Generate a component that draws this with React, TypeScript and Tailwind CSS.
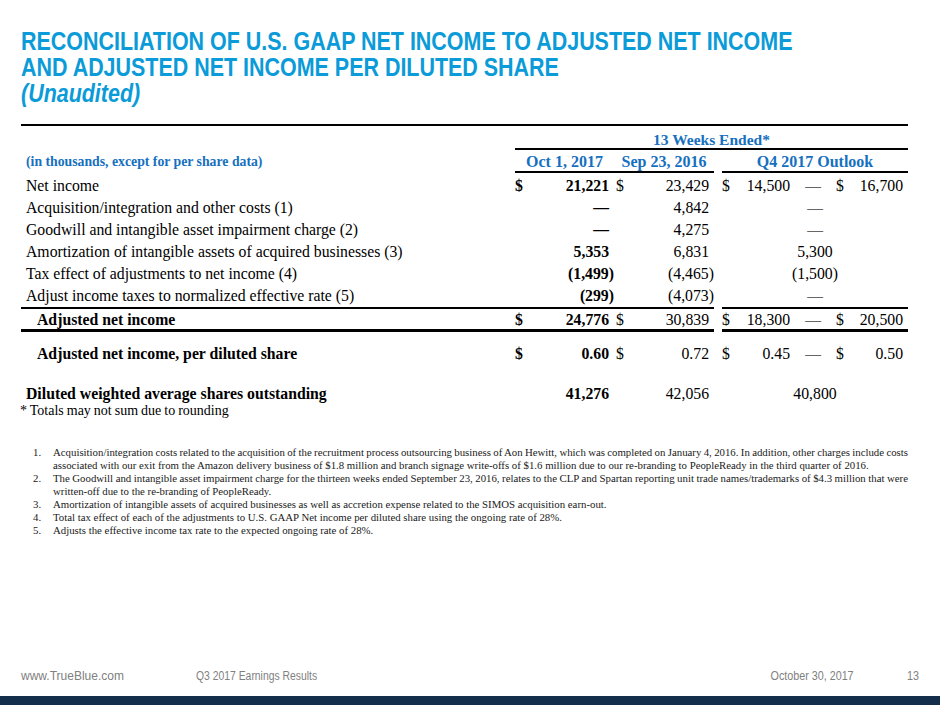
const serif = { fontFamily: '"Liberation Serif", "Times New Roman", serif' }
const sans = { fontFamily: '"Liberation Sans", Arial, sans-serif' }

type Cell = string | null

function Num({ v, bold }: { v: Cell; bold?: boolean }) {
  if (v === null) return null
  const paren = v.endsWith(')')
  return <span className={`${paren ? '' : 'pr-[5px]'} ${bold ? 'font-bold' : ''}`}>{v}</span>
}

function Row({
  label,
  c1,
  c2,
  out,
  dollar,
  bold,
  labelBold,
  indent,
  rowClass,
  leftBorder,
  rightBorder,
}: {
  label: string
  c1: Cell
  c2: Cell
  out: string | [string, string] | null
  dollar?: boolean
  bold?: boolean
  labelBold?: boolean
  indent?: boolean
  rowClass: string
  leftBorder?: string
  rightBorder?: string
}) {
  return (
    <div className={`flex ${rowClass}`}>
      <div className={`flex w-[693px] ${leftBorder ?? ''}`}>
        <div className={`flex-1 ${indent ? 'pl-[16px]' : 'pl-[5px]'} ${labelBold ? 'font-bold' : ''}`}>{label}</div>
        <div className="w-[99px] flex justify-between">
          <span className="font-bold">{dollar ? '$' : ''}</span>
          <Num v={c1} bold={bold} />
        </div>
        <div className="w-[100px] flex justify-between pl-[2px]">
          <span>{dollar ? '$' : ''}</span>
          <Num v={c2} />
        </div>
      </div>
      <div className="w-[8px]" />
      <div className={`w-[186px] ${rightBorder ?? ''}`}>
        {Array.isArray(out) ? (
          <div className="flex">
            <span className="w-[8px]">$</span>
            <span className="w-[60px] text-right">{out[0]}</span>
            <span className="w-[46px] text-center text-[#666]">—</span>
            <span className="w-[8px]">$</span>
            <span className="w-[59px] text-right">{out[1]}</span>
          </div>
        ) : (
          <div className={`text-center ${out === '—' ? 'text-[#666]' : ''}`}>{out}</div>
        )}
      </div>
    </div>
  )
}

const notes: string[][] = [
  [
    'Acquisition/integration costs related to the acquisition of the recruitment process outsourcing business of Aon Hewitt, which was completed on January 4, 2016. In addition, other charges include costs',
    'associated with our exit from the Amazon delivery business of $1.8 million and branch signage write-offs of $1.6 million due to our re-branding to PeopleReady in the third quarter of 2016.',
  ],
  [
    'The Goodwill and intangible asset impairment charge for the thirteen weeks ended September 23, 2016, relates to the CLP and Spartan reporting unit trade names/trademarks of $4.3 million that were',
    'written-off due to the re-branding of PeopleReady.',
  ],
  ['Amortization of intangible assets of acquired businesses as well as accretion expense related to the SIMOS acquisition earn-out.'],
  ['Total tax effect of each of the adjustments to U.S. GAAP Net income per diluted share using the ongoing rate of 28%.'],
  ['Adjusts the effective income tax rate to the expected ongoing rate of 28%.'],
]

export default function App() {
  return (
    <div className="w-[940px] h-[705px] bg-white flex flex-col overflow-hidden">
      {/* title, condensed like Arial Narrow */}
      <div className="pt-[28px] pl-[21px] w-[780px] text-[#0a9bd8] font-bold text-[26px] leading-[26px]" style={sans}>
        <div className="whitespace-nowrap origin-left scale-x-[0.825]">RECONCILIATION OF U.S. GAAP NET INCOME TO ADJUSTED NET INCOME</div>
        <div className="whitespace-nowrap origin-left scale-x-[0.825]">AND ADJUSTED NET INCOME PER DILUTED SHARE</div>
        <div className="whitespace-nowrap origin-left scale-x-[0.825] italic">(Unaudited)</div>
      </div>

      {/* table */}
      <div className="mt-[18px] ml-[21px] w-[887px] text-black text-[15.75px]" style={serif}>
        <div className="border-t-2 border-black" />
        <div className="flex h-[24px]">
          <div className="w-[494px]" />
          <div className="flex-1 border-b-2 border-black text-center font-bold text-[15.5px] text-[#1670c0] pt-[6px] leading-[16px]">
            13 Weeks Ended*
          </div>
        </div>
        <div className="flex h-[23px] leading-[21px] font-bold text-[16px] text-[#1670c0]">
          <div className="flex w-[693px]">
            <div className="flex-1 pl-[5px] text-[13.75px] pt-[1px]">(in thousands, except for per share data)</div>
            <div className="w-[199px] flex border-b-2 border-black pt-[1px]">
              <div className="w-[99px] text-center">Oct 1, 2017</div>
              <div className="w-[100px] text-center">Sep 23, 2016</div>
            </div>
          </div>
          <div className="w-[8px]" />
          <div className="w-[186px] text-center border-b-2 border-black pt-[1px]">Q4 2017 Outlook</div>
        </div>

        <div className="mt-[2px] leading-[22px]">
          <Row rowClass="h-[22px]" label="Net income" c1="21,221" c2="23,429" out={['14,500', '16,700']} dollar bold />
          <Row rowClass="h-[22px]" label="Acquisition/integration and other costs (1)" c1="—" c2="4,842" out="—" bold />
          <Row rowClass="h-[22px]" label="Goodwill and intangible asset impairment charge (2)" c1="—" c2="4,275" out="—" bold />
          <Row rowClass="h-[22px]" label="Amortization of intangible assets of acquired businesses (3)" c1="5,353" c2="6,831" out="5,300" bold />
          <Row rowClass="h-[22px]" label="Tax effect of adjustments to net income (4)" c1="(1,499)" c2="(4,465)" out="(1,500)" bold />
          <Row
            rowClass="h-[24px]"
            label="Adjust income taxes to normalized effective rate (5)"
            c1="(299)"
            c2="(4,073)"
            out="—"
            bold
            leftBorder="border-b-2 border-black"
            rightBorder="border-b-2 border-black"
          />
          <Row
            rowClass="h-[23px] leading-[21px]"
            label="Adjusted net income"
            c1="24,776"
            c2="30,839"
            out={['18,300', '20,500']}
            dollar
            bold
            labelBold
            indent
            leftBorder="border-b-[3px] border-black"
            rightBorder="border-b-[3px] border-black"
          />
          <Row
            rowClass="mt-[11px] h-[22px]"
            label="Adjusted net income, per diluted share"
            c1="0.60"
            c2="0.72"
            out={['0.45', '0.50']}
            dollar
            bold
            labelBold
            indent
          />
          <Row rowClass="mt-[18px] h-[22px]" label="Diluted weighted average shares outstanding" c1="41,276" c2="42,056" out="40,800" bold labelBold />
        </div>
        <div className="text-[14px] leading-[12px] -ml-[1px] [word-spacing:-0.5px]">* Totals may not sum due to rounding</div>
      </div>

      {/* footnotes */}
      <div className="mt-[29px] ml-[33px] w-[875px] text-[10.8px] leading-[13px] text-[#1a1a1a]" style={serif}>
        {notes.map((lines, i) => (
          <div key={i} className="flex">
            <div className="w-[20px] shrink-0">{i + 1}.</div>
            <div className="flex-1 min-w-0">
              {lines.map((l, j) =>
                j < lines.length - 1 ? (
                  <div key={j} className="whitespace-nowrap text-justify [text-align-last:justify] [word-spacing:-1.2px]">
                    {l}
                  </div>
                ) : (
                  <div key={j}>{l}</div>
                )
              )}
            </div>
          </div>
        ))}
      </div>

      <div className="flex-1" />

      {/* footer */}
      <div className="flex items-center px-[21px] pb-[13px] text-[12px] leading-[14px] text-[#808080]" style={sans}>
        <div className="w-[175px]">www.TrueBlue.com</div>
        <div className="text-[12.5px] whitespace-nowrap origin-left scale-x-[0.83]">Q3 2017 Earnings Results</div>
        <div className="flex-1" />
        <div className="text-[12.5px] whitespace-nowrap origin-right scale-x-[0.86] mr-[-2px]">October 30, 2017</div>
        <div className="w-[53px]" />
        <div className="text-[12.5px] whitespace-nowrap origin-right scale-x-[0.86]">13</div>
      </div>
      <div className="h-[9px] bg-[#132e4b]" />
    </div>
  )
}
